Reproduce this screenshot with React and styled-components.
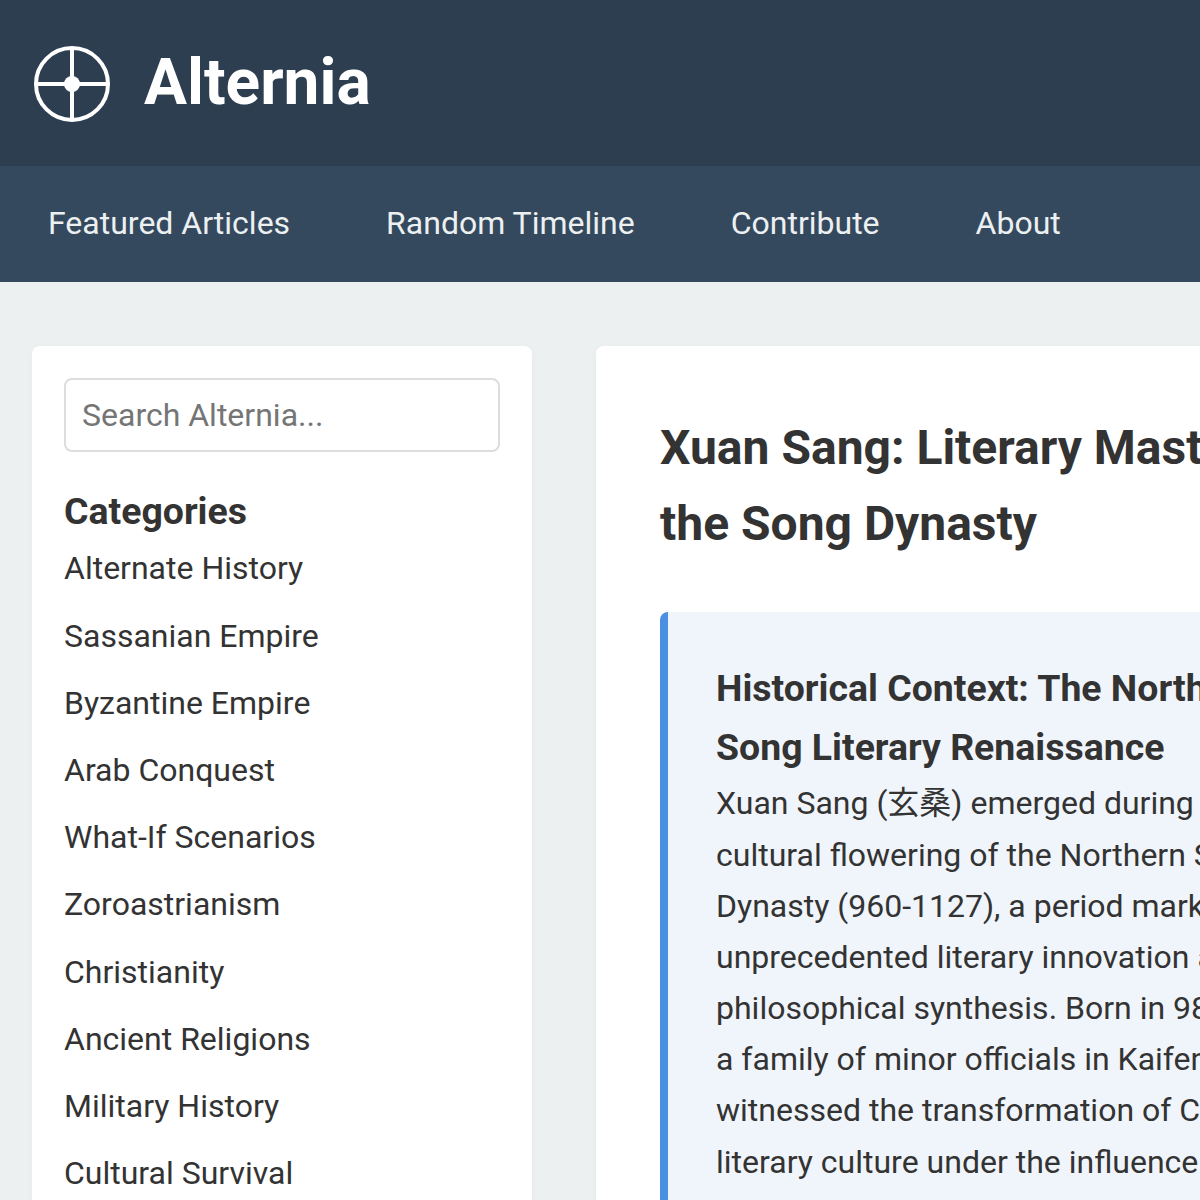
import React from 'react';
import styled, { createGlobalStyle } from 'styled-components';

const GlobalStyle = createGlobalStyle`
  html, body {
    margin: 0;
    height: 1200px;
    overflow: hidden;
    background: #ecf0f1;
    color: #333;
    font-family: Roboto, "Noto Sans CJK JP", sans-serif;
    font-size: 32px;
    line-height: 1.6;
  }
  * { box-sizing: border-box; }
`;

const Header = styled.header`
  display: flex;
  align-items: center;
  gap: 32px;
  padding: 32px;
  background: #2c3e50;
  color: #fff;
`;

const LogoMark = styled.svg`
  display: block;
  margin-top: 1px;
`;

const SiteName = styled.h1`
  margin: 0;
  font-size: 64px;
  font-weight: 700;
`;

const Nav = styled.nav`
  display: flex;
  gap: 96px;
  padding: 32px 48px;
  background: #34495e;
`;

const NavLink = styled.a`
  color: #ecf0f1;
  white-space: nowrap;
`;

const Layout = styled.div`
  display: grid;
  grid-template-columns: 500px 1136px;
  gap: 64px;
  padding: 64px 32px;
`;

const Card = styled.div`
  background: #fff;
  border-radius: 8px;
  box-shadow: 0 2px 8px rgba(0, 0, 0, 0.03);
`;

const Sidebar = styled(Card)`
  padding: 32px;
`;

const Search = styled.input`
  display: block;
  width: 100%;
  height: 74px;
  margin-bottom: 30px;
  padding: 16px;
  border: 2px solid #ddd;
  border-radius: 8px;
  background: #fff;
  color: #333;
  font: inherit;
  &::placeholder { color: #757575; opacity: 1; }
`;

const SideTitle = styled.h3`
  margin: 0 0 2px;
  font-size: 37.44px;
  font-weight: 700;
`;

const CategoryList = styled.ul`
  display: flex;
  flex-direction: column;
  gap: 16px;
  margin: 0;
  padding: 0;
  list-style: none;
`;

const Main = styled(Card)`
  padding: 64px;
`;

const Title = styled.h2`
  margin: 0 0 49px;
  font-size: 48px;
  font-weight: 700;
  white-space: nowrap;
`;

const Section = styled.section`
  padding: 46.4px 48px 48px;
  background: #f0f5fb;
  border-left: 8px solid #4a90e2;
  border-radius: 8px;
  white-space: nowrap;
`;

const SectionTitle = styled.h3`
  margin: 0;
  font-size: 37.44px;
  font-weight: 700;
`;

const Body = styled.p`
  margin: 0;
`;

const categories = [
  'Alternate History',
  'Sassanian Empire',
  'Byzantine Empire',
  'Arab Conquest',
  'What-If Scenarios',
  'Zoroastrianism',
  'Christianity',
  'Ancient Religions',
  'Military History',
  'Cultural Survival',
];

const Logo = () => (
  <LogoMark width="80" height="80" viewBox="0 0 80 80" fill="none" stroke="#fff" strokeWidth="4">
    <circle cx="40" cy="40" r="36" />
    <path d="M40 4v72M4 40h72" />
    <circle cx="40" cy="40" r="8" fill="#fff" stroke="none" />
  </LogoMark>
);

export default function App() {
  return (
    <>
      <GlobalStyle />
      <Header>
        <Logo />
        <SiteName>Alternia</SiteName>
      </Header>
      <Nav>
        <NavLink>Featured Articles</NavLink>
        <NavLink>Random Timeline</NavLink>
        <NavLink>Contribute</NavLink>
        <NavLink>About</NavLink>
      </Nav>
      <Layout>
        <Sidebar>
          <Search placeholder="Search Alternia..." />
          <SideTitle>Categories</SideTitle>
          <CategoryList>
            {categories.map((c) => <li key={c}>{c}</li>)}
          </CategoryList>
        </Sidebar>
        <Main>
          <Title>Xuan Sang: Literary Master of<br />the Song Dynasty</Title>
          <Section>
            <SectionTitle>Historical Context: The Northern<br />Song Literary Renaissance</SectionTitle>
            <Body>
              Xuan Sang (玄桑) emerged during the<br />
              cultural flowering of the Northern Song<br />
              Dynasty (960-1127), a period marked by<br />
              unprecedented literary innovation and<br />
              philosophical synthesis. Born in 985 to<br />
              a family of minor officials in Kaifeng, he<br />
              witnessed the transformation of Chinese<br />
              literary culture under the influence of
            </Body>
          </Section>
        </Main>
      </Layout>
    </>
  );
}
